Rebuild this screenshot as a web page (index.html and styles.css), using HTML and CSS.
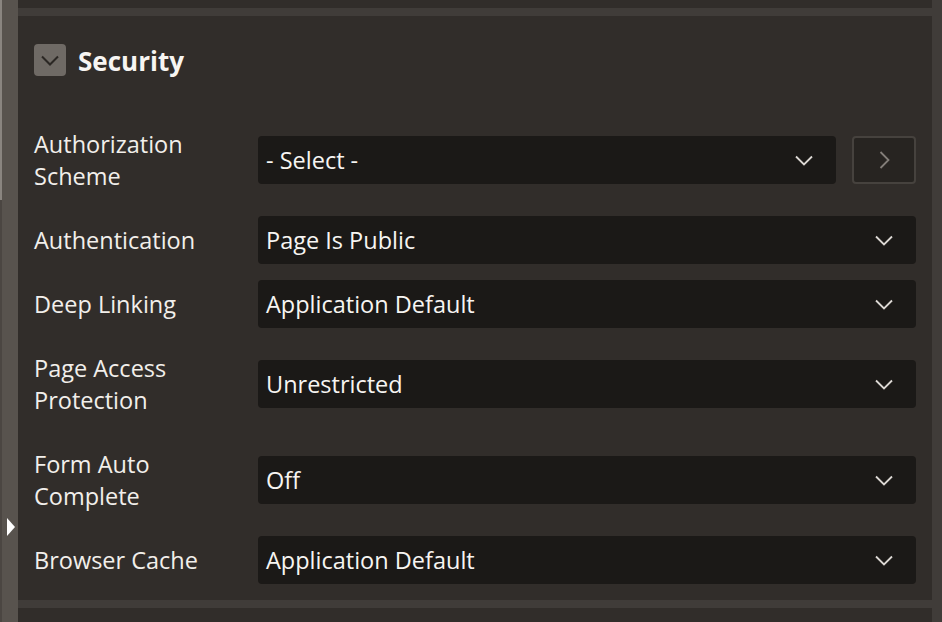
FILE: index.html
```html
<!DOCTYPE html>
<html lang="en">
<head>
<meta charset="utf-8">
<title>Security</title>
<link rel="stylesheet" href="styles.css">
</head>
<body>
<div class="rail">
  <div class="rail-track"><div class="rail-thumb"></div></div>
  <div class="rail-body"><span class="rail-arrow"></span></div>
</div>
<div class="main">
  <div class="top-gap"></div>
  <div class="band"></div>
  <section class="panel">
    <header class="panel-head">
      <span class="toggle">
        <svg width="18" height="11" viewBox="0 0 18 11"><path d="M1 1.5 L9 9.5 L17 1.5" fill="none" stroke="#2b2724" stroke-width="2"/></svg>
      </span>
      <h2 class="title">Security</h2>
    </header>
    <div class="row">
      <div class="label">Authorization<br>Scheme</div>
      <div class="control">
        <div class="select"><span class="value">- Select -</span>
          <svg class="chev" width="18" height="11" viewBox="0 0 18 11"><path d="M1 1.5 L9 9.5 L17 1.5" fill="none" stroke="#dcd8d4" stroke-width="1.8"/></svg>
        </div>
        <button class="go" type="button">
          <svg width="11" height="18" viewBox="0 0 11 18"><path d="M1.5 1 L9.5 9 L1.5 17" fill="none" stroke="#837e79" stroke-width="1.8"/></svg>
        </button>
      </div>
    </div>
    <div class="row">
      <div class="label">Authentication</div>
      <div class="control">
        <div class="select"><span class="value">Page Is Public</span>
          <svg class="chev" width="18" height="11" viewBox="0 0 18 11"><path d="M1 1.5 L9 9.5 L17 1.5" fill="none" stroke="#dcd8d4" stroke-width="1.8"/></svg>
        </div>
      </div>
    </div>
    <div class="row">
      <div class="label">Deep Linking</div>
      <div class="control">
        <div class="select"><span class="value">Application Default</span>
          <svg class="chev" width="18" height="11" viewBox="0 0 18 11"><path d="M1 1.5 L9 9.5 L17 1.5" fill="none" stroke="#dcd8d4" stroke-width="1.8"/></svg>
        </div>
      </div>
    </div>
    <div class="row">
      <div class="label">Page Access<br>Protection</div>
      <div class="control">
        <div class="select"><span class="value">Unrestricted</span>
          <svg class="chev" width="18" height="11" viewBox="0 0 18 11"><path d="M1 1.5 L9 9.5 L17 1.5" fill="none" stroke="#dcd8d4" stroke-width="1.8"/></svg>
        </div>
      </div>
    </div>
    <div class="row">
      <div class="label">Form Auto<br>Complete</div>
      <div class="control">
        <div class="select"><span class="value">Off</span>
          <svg class="chev" width="18" height="11" viewBox="0 0 18 11"><path d="M1 1.5 L9 9.5 L17 1.5" fill="none" stroke="#dcd8d4" stroke-width="1.8"/></svg>
        </div>
      </div>
    </div>
    <div class="row">
      <div class="label">Browser Cache</div>
      <div class="control">
        <div class="select"><span class="value">Application Default</span>
          <svg class="chev" width="18" height="11" viewBox="0 0 18 11"><path d="M1 1.5 L9 9.5 L17 1.5" fill="none" stroke="#dcd8d4" stroke-width="1.8"/></svg>
        </div>
      </div>
    </div>
  </section>
  <div class="band"></div>
  <div class="rest"></div>
</div>
<div class="scrollbar"></div>
</body>
</html>
```

FILE: styles.css
```css
* { box-sizing: border-box; }
html, body { margin: 0; padding: 0; }
body {
  width: 942px;
  height: 622px;
  overflow: hidden;
  display: flex;
  background: #312d2a;
  font-family: "Open Sans", "Noto Sans", sans-serif;
  color: #f2efeb;
}
.rail { width: 18px; flex: none; display: flex; }
.rail-track { width: 2px; background: #4b4642; }
.rail-thumb { height: 200px; background: #8a8580; }
.rail-body {
  flex: 1;
  background: #58534e;
  padding-top: 518px;
  padding-left: 5px;
}
.rail-arrow {
  display: block;
  width: 0;
  height: 0;
  border-left: 8px solid #ffffff;
  border-top: 9px solid transparent;
  border-bottom: 9px solid transparent;
}
.main { flex: 1; display: flex; flex-direction: column; min-width: 0; }
.top-gap { height: 8px; flex: none; }
.band { height: 8px; flex: none; background: #403c39; }
.rest { flex: 1; }
.scrollbar { width: 10px; flex: none; background: #403c39; }
.panel {
  height: 584px;
  flex: none;
  background: #312d2a;
  padding: 0 16px;
}
.panel-head {
  display: flex;
  align-items: center;
  gap: 12px;
  padding-top: 28px;
  height: 60px;
  margin-bottom: 36px;
}
.toggle {
  width: 32px;
  height: 32px;
  border-radius: 4px;
  background: #6f6a65;
  display: flex;
  align-items: center;
  justify-content: center;
  padding-top: 1px;
}
.title {
  margin: 0;
  padding-top: 2px;
  font-size: 26px;
  font-weight: 700;
  line-height: 32px;
  color: #f7f5f2;
}
.row {
  display: grid;
  grid-template-columns: 224px 1fr;
  align-items: center;
  padding: 8px 0;
  min-height: 64px;
}
.label {
  font-size: 23.5px;
  font-weight: 500;
  line-height: 32px;
  padding: 8px 0;
}
.control { display: flex; align-items: center; gap: 16px; }
.select {
  flex: 1;
  height: 48px;
  background: #1b1917;
  border-radius: 4px;
  display: flex;
  align-items: center;
  justify-content: space-between;
  padding: 0 23px 0 8px;
  font-size: 23.5px;
  font-weight: 500;
}
.value { color: #f7f5f2; }
.go {
  width: 64px;
  height: 48px;
  flex: none;
  border: 2px solid #46423e;
  border-radius: 4px;
  background: #272421;
  display: flex;
  align-items: center;
  justify-content: center;
  padding: 0;
}
```
